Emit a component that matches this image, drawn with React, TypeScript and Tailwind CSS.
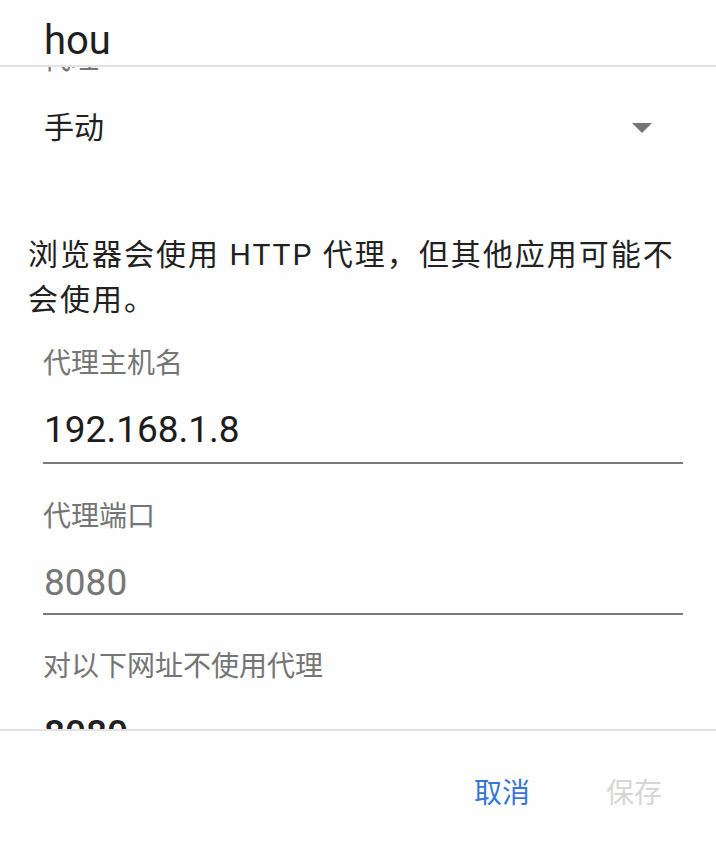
import React from 'react'

type FieldProps = {
  label: string
  value: string
  hint?: boolean
  top: string
  bottom: string
}

function Field(props: FieldProps) {
  const { label, value, hint = false, top, bottom } = props
  return (
    <div className="flex flex-col">
      <div className={`${top} px-[43px] text-[28px] leading-[40px] text-[#757575]`}>{label}</div>
      <div className={`ml-[43px] mr-[33px] border-b-2 border-[#7a7a7a] ${bottom}`}>
        <div
          className={`pt-[26px] pl-[1px] text-[37px] leading-[40px] ${
            hint ? 'text-[#777777]' : 'text-[#1c1c1c]'
          }`}>
          {value}
        </div>
      </div>
    </div>
  )
}

export default function App() {
  return (
    <div className="flex h-[842px] w-[716px] flex-col overflow-hidden bg-[#fdfefd] font-[Roboto,'Noto_Sans_CJK_SC',sans-serif] text-[#212121]">
      {/* title */}
      <div className="h-[67px] shrink-0 border-b-2 border-[#e2e2e2] pl-[44px] pt-[21px]">
        <div className="text-[40px] leading-[40px] text-[#1f1f1f]">hou</div>
      </div>

      {/* scrolled content */}
      <div className="flex-1 overflow-hidden">
        <div className="-mt-[27px] flex flex-col">
          <div className="h-[40px] px-[43px] text-[28px] leading-[40px] text-[#757575]">代理</div>
          <div className="flex h-[96px] items-center justify-between pl-[44px] pr-[64px]">
            <span className="text-[30px] leading-[40px] text-[#212121]">手动</span>
            <svg width="20" height="10" viewBox="0 0 20 10">
              <polygon points="0,0 20,0 10,10" fill="#757575" />
            </svg>
          </div>
          <p className="mt-[56px] px-[28px] text-[30px] leading-[45px] tracking-[2px] text-[#212121]">
            浏览器会使用 HTTP 代理，但其他应用可能不会使用。
          </p>
          <Field label="代理主机名" value="192.168.1.8" top="mt-[22px]" bottom="pb-[12px]" />
          <Field label="代理端口" value="8080" hint top="mt-[33px]" bottom="pb-[10px]" />
          <div className="mt-[32px] px-[43px] text-[28px] leading-[40px] text-[#757575]">
            对以下网址不使用代理
          </div>
          <div className="mt-[27px] px-[44px] text-[37px] leading-[40px] font-medium text-[#212121]">
            8080
          </div>
        </div>
      </div>

      {/* buttons */}
      <div className="flex h-[113px] shrink-0 items-start justify-end gap-[76px] border-t-2 border-[#e2e2e2] pr-[54px] pt-[43px]">
        <button className="h-[40px] text-[28px] leading-[40px] text-[#3875d8]">取消</button>
        <button className="h-[40px] text-[28px] leading-[40px] text-[#d6d6d6]" disabled>
          保存
        </button>
      </div>
    </div>
  )
}
